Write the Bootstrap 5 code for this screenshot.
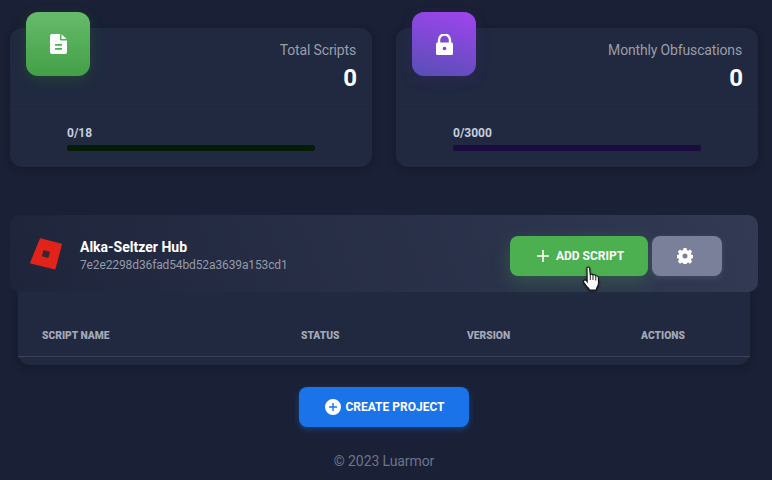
<!DOCTYPE html>
<html lang="en">
<head>
<meta charset="utf-8">
<title>Luarmor</title>
<link href="https://cdn.jsdelivr.net/npm/bootstrap@5.3.0/dist/css/bootstrap.min.css" rel="stylesheet">
<style>
html,body{height:100%;}
body{background:#1a2035;font-family:Roboto,"Liberation Sans",sans-serif;overflow:hidden;color:#fff;}
.page-wrap{padding:28px 14px 0 10px;height:480px;position:relative;}
.stats-row{gap:24px;}
.stat-box{width:362px;height:139px;background:#202940;border-radius:12px;position:relative;box-shadow:0 2px 8px rgba(0,0,0,.2);}
.stat-icon{position:absolute;left:16px;top:-16px;width:64px;height:64px;border-radius:12px;}
.stat-icon svg{display:block;}
.icon-green{background:linear-gradient(180deg,#66bb6a,#43a047);box-shadow:0 4px 14px rgba(76,175,80,.25),0 4px 12px rgba(0,0,0,.2);}
.icon-purple{background:linear-gradient(195deg,#a044f0,#574fb4);box-shadow:0 4px 14px rgba(120,70,220,.22),0 4px 12px rgba(0,0,0,.2);}
.stat-head{height:82px;padding:13px 16px 0 0;border-bottom:1px solid #232c44;text-align:right;}
.stat-title{font-size:14px;line-height:18px;font-weight:400;letter-spacing:-.15px;color:#999da9;}
.stat-num{font-size:24px;line-height:28px;font-weight:700;margin-top:5px;margin-right:-1px;}
.stat-foot{padding:16px 0 0 57px;}
.usage-label{font-size:12px;line-height:14px;font-weight:700;color:#c6cedd;}
.usage-bar{width:248px;height:6px;border-radius:2px;margin-top:5px;}
.bar-green{background:#051c06;}
.bar-purple{background:#1a0c3f;}
.hub-bar{margin-top:48px;height:77px;width:748px;border-radius:10px;background:linear-gradient(70deg,#1e253b,#323a54);padding:0 36px 0 20px;position:relative;z-index:2;}
.hub-logo{width:32px;height:32px;flex:none;}
.hub-text{margin-top:6px;}
.hub-name{font-size:14px;line-height:17px;font-weight:700;margin-left:18px;}
.hub-id{font-size:12px;line-height:18px;font-weight:400;letter-spacing:-.12px;color:#969aa8;margin-left:18px;}
.hub-actions{margin-top:4px;}
.plus-mark{margin-right:7px;}
.btn-add,.btn-gear,.btn-create{height:40px;border:0;border-radius:8px;color:#fff;font-size:12px;font-weight:700;padding:0;}
.btn-add{width:138px;background:#4caf50;box-shadow:0 6px 18px rgba(76,175,80,.28);padding-left:3px;}
.btn-add:hover{background:#4caf50;color:#fff;}
.btn-gear{width:70px;margin-left:4px;background:#7b809a;box-shadow:0 2px 6px rgba(123,128,154,.25);padding-right:4px;}
.btn-gear:hover{background:#7b809a;}
.btn-create{width:170px;background:#1a73e8;box-shadow:0 2px 6px rgba(26,115,232,.4);padding-left:2px;}
.btn-create:hover{background:#1a73e8;color:#fff;}
.scripts-box{width:732px;margin-left:8px;height:73px;background:#202940;border-radius:0 0 12px 12px;box-shadow:0 2px 8px rgba(0,0,0,.25);padding-top:36px;}
.col-heads{height:29px;border-bottom:1px solid #3a4258;font-size:10.3px;line-height:16px;font-weight:900;color:#a4a8b6;}
.col-heads span{display:block;}
.head-name{width:259px;padding-left:24px;flex:none;}
.head-status{width:166px;padding-left:24px;flex:none;}
.head-version{width:174px;padding-left:24px;flex:none;}
.head-actions{padding-left:24px;}
.create-wrap{margin-top:22px;width:748px;}
.site-foot{width:748px;margin-top:24px;font-size:14px;line-height:20px;font-weight:400;letter-spacing:-.1px;color:#6f7488;text-align:center;}
.hand-cursor{position:absolute;left:583px;top:266px;width:17px;height:25px;z-index:5;filter:drop-shadow(0 1px 1px rgba(0,0,0,.5));}
</style>
</head>
<body>
<div class="page-wrap">
  <div class="d-flex stats-row">
    <div class="stat-box">
      <div class="stat-icon icon-green d-flex align-items-center justify-content-center">
        <svg width="17" height="20" viewBox="0 0 17 20"><path d="M2 0h8v5.500a1 1 0 0 0 1 1h6V18a2 2 0 0 1-2 2H2a2 2 0 0 1-2-2V2a2 2 0 0 1 2-2z" fill="#fff"/><path d="M11.500 0.300 16.700 5H11.500z" fill="#fff"/><path d="M5 10h7v1.700H5zM5 14h7v1.700H5z" fill="#4caf50"/></svg>
      </div>
      <div class="stat-head">
        <div class="stat-title">Total Scripts</div>
        <div class="stat-num">0</div>
      </div>
      <div class="stat-foot">
        <div class="usage-label">0/18</div>
        <div class="usage-bar bar-green"></div>
      </div>
    </div>
    <div class="stat-box">
      <div class="stat-icon icon-purple d-flex align-items-center justify-content-center">
        <svg width="17" height="21" viewBox="0 0 17 21"><path d="M3 9V6a5.500 5.500 0 0 1 11 0v3" fill="none" stroke="#fff" stroke-width="2.400"/><path d="M1.500 8.500h14A1.500 1.500 0 0 1 17 10v9.500A1.500 1.500 0 0 1 15.500 21h-14A1.500 1.500 0 0 1 0 19.500V10a1.500 1.500 0 0 1 1.500-1.500z" fill="#fff"/><circle cx="8.500" cy="14.500" r="1.800" fill="#7448d0"/></svg>
      </div>
      <div class="stat-head">
        <div class="stat-title">Monthly Obfuscations</div>
        <div class="stat-num">0</div>
      </div>
      <div class="stat-foot">
        <div class="usage-label">0/3000</div>
        <div class="usage-bar bar-purple"></div>
      </div>
    </div>
  </div>

  <div class="hub-bar d-flex align-items-center">
    <svg class="hub-logo" viewBox="0 0 32 32"><path d="M10.500 0.300 31.700 5.700a.6.6 0 0 1 .3.700L25.500 31a.6.6 0 0 1-.7.400L.500 25.400a.6.6 0 0 1-.4-.7L9.800 .7a.6.6 0 0 1 .7-.4z" fill="#e2231a"/><path d="M13.500 12 20 13.700 18.400 20 11.900 18.300z" fill="#3a2630"/></svg>
    <div class="hub-text">
      <div class="hub-name">Alka-Seltzer Hub</div>
      <div class="hub-id">7e2e2298d36fad54bd52a3639a153cd1</div>
    </div>
    <div class="ms-auto d-flex hub-actions">
      <button class="btn btn-add d-flex align-items-center justify-content-center" type="button">
        <svg class="plus-mark" width="12" height="12" viewBox="0 0 12 12"><path d="M5.200 0h1.600v5.200H12v1.600H6.800V12H5.200V6.800H0V5.200h5.200z" fill="#fff"/></svg>ADD SCRIPT
      </button>
      <button class="btn btn-gear d-flex align-items-center justify-content-center" type="button" aria-label="Settings">
        <svg width="16" height="16" viewBox="0 0 16 16"><path fill-rule="evenodd" fill="#fff" d="M6.500 0h3l.4 2.100 1.300.6L13 1.500l2.100 2.100-1.200 1.800.6 1.300 2 .4v3l-2 .4-.6 1.300 1.200 1.800-2.100 2.100-1.800-1.200-1.300.6-.4 1.900h-3l-.4-1.900-1.300-.6-1.800 1.200L.9 13.600l1.200-1.800-.6-1.300-2-.4v-3l2-.4.6-1.300L.9 3.600 3 1.500l1.800 1.200 1.300-.6zM8 5.500a2.500 2.500 0 1 0 0 5 2.500 2.500 0 0 0 0-5z"/></svg>
      </button>
    </div>
  </div>

  <div class="scripts-box">
    <div class="col-heads d-flex">
      <span class="head-name">SCRIPT NAME</span>
      <span class="head-status">STATUS</span>
      <span class="head-version">VERSION</span>
      <span class="head-actions">ACTIONS</span>
    </div>
  </div>

  <div class="create-wrap d-flex justify-content-center">
    <button class="btn btn-create d-flex align-items-center justify-content-center" type="button">
      <svg class="me-1" width="16" height="16" viewBox="0 0 16 16"><path fill-rule="evenodd" fill="#fff" d="M8 0a8 8 0 1 1 0 16A8 8 0 0 1 8 0zM7.300 4v3.300H4v1.400h3.300V12h1.400V8.700H12V7.300H8.700V4z"/></svg>CREATE PROJECT
    </button>
  </div>

  <div class="site-foot">© 2023 Luarmor</div>

  <svg class="hand-cursor" viewBox="0 0 17 25"><path d="M4 1.500c.9-1 2.300-.6 2.600.7l.6 6.300 1-.3c.8-.2 1.500.1 1.800.7l.9-.1c.8-.1 1.400.3 1.700.9l.8 0c1.100 0 1.900.8 2 2l.1 5c0 2-.6 3.800-1.800 5.300l-.5 2H6.500l-.7-1.500C4 21 2.400 18.800 1 16.700c-.7-1-.5-2 .2-2.500.8-.5 1.700-.2 2.300.6l.7 1z" fill="#fff" stroke="#111" stroke-width="1.100"/><path d="M7.300 9v5M10 9v5M12.800 10v4.500" stroke="#111" stroke-width=".9" fill="none"/></svg>
</div>
<script src="https://cdn.jsdelivr.net/npm/bootstrap@5.3.0/dist/js/bootstrap.bundle.min.js"></script>
</body>
</html>
